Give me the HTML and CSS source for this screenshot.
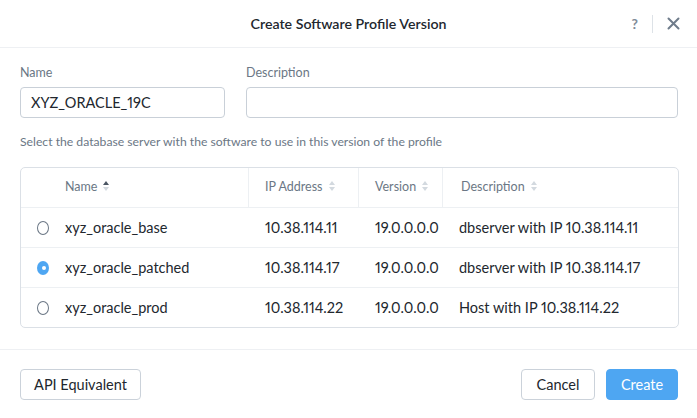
FILE: index.html
```html
<!DOCTYPE html>
<html>
<head>
<meta charset="utf-8">
<link rel="stylesheet" href="styles.css">
</head>
<body>
<div class="modal">
  <header class="header">
    <h1 class="title">Create Software Profile Version</h1>
    <div class="actions">
      <span class="help">?</span>
      <span class="sep"></span>
      <svg class="close" width="13" height="13" viewBox="0 0 13 13"><path d="M1.5 1.5 L11.5 11.5 M11.5 1.5 L1.5 11.5" stroke="#6f7c8b" stroke-width="2" stroke-linecap="round"/></svg>
    </div>
  </header>
  <main class="body">
    <div class="fields">
      <div class="field">
        <label class="label">Name</label>
        <div class="input">XYZ_ORACLE_19C</div>
      </div>
      <div class="field">
        <label class="label">Description</label>
        <div class="input"></div>
      </div>
    </div>
    <p class="hint">Select the database server with the software to use in this version of the profile</p>
    <div class="table">
      <div class="row head">
        <div class="cell sel"></div>
        <div class="cell">Name <span class="sort up"><i></i><i></i></span></div>
        <div class="cell">IP Address <span class="sort"><i></i><i></i></span></div>
        <div class="cell">Version <span class="sort"><i></i><i></i></span></div>
        <div class="cell last">Description <span class="sort"><i></i><i></i></span></div>
      </div>
      <div class="row">
        <div class="cell sel"><span class="radio"></span></div>
        <div class="cell">xyz_oracle_base</div>
        <div class="cell">10.38.114.11</div>
        <div class="cell">19.0.0.0.0</div>
        <div class="cell">dbserver with IP 10.38.114.11</div>
      </div>
      <div class="row">
        <div class="cell sel"><span class="radio on"></span></div>
        <div class="cell">xyz_oracle_patched</div>
        <div class="cell">10.38.114.17</div>
        <div class="cell">19.0.0.0.0</div>
        <div class="cell">dbserver with IP 10.38.114.17</div>
      </div>
      <div class="row">
        <div class="cell sel"><span class="radio"></span></div>
        <div class="cell">xyz_oracle_prod</div>
        <div class="cell">10.38.114.22</div>
        <div class="cell">19.0.0.0.0</div>
        <div class="cell">Host with IP 10.38.114.22</div>
      </div>
    </div>
  </main>
  <footer class="footer">
    <button class="btn api">API Equivalent</button>
    <div class="right">
      <button class="btn cancel">Cancel</button>
      <button class="btn primary">Create</button>
    </div>
  </footer>
</div>
</body>
</html>
```

FILE: styles.css
```css
* { box-sizing: border-box; }
html, body { margin: 0; padding: 0; background: #fff; }
body {
  font-family: Lato, "Open Sans", "Liberation Sans", sans-serif;
  font-variant-numeric: proportional-nums;
  font-feature-settings: "pnum" 1;
  color: #22272e;
  width: 697px;
  height: 418px;
  overflow: hidden;
}
.header {
  height: 48px;
  border-bottom: 1px solid #eef0f3;
  display: flex;
  align-items: center;
  justify-content: center;
  position: relative;
}
.title {
  margin: 0;
  font-size: 14.2px;
  font-weight: 600;
  color: #22272e;
}
.actions {
  position: absolute;
  right: 17px;
  top: 0;
  height: 47px;
  display: flex;
  align-items: center;
}
.help {
  font-size: 14px;
  color: #7f8c99;
  font-weight: 700;
}
.sep {
  width: 1px;
  height: 18px;
  background: #dde2e7;
  margin: 0 14px 0 14px;
}
.close { display: block; }
.body {
  padding: 17px 19px 0 20px;
}
.fields {
  display: grid;
  grid-template-columns: 205px 1fr;
  gap: 21px;
}
.label {
  display: block;
  font-size: 12.5px;
  line-height: 16px;
  color: #6b7785;
  margin-bottom: 6px;
}
.input {
  height: 31px;
  border: 1px solid #c9d0d8;
  border-radius: 4px;
  padding: 0 10px;
  font-size: 14.5px;
  line-height: 29px;
  color: #22272e;
}
.hint {
  margin: 16px 0 17px;
  font-size: 12.2px;
  line-height: 16px;
  color: #6b7785;
}
.table {
  border: 1px solid #dbe0e6;
  border-radius: 5px;
  width: 659px;
}
.row {
  display: grid;
  grid-template-columns: 28px 200px 110px 84px 1fr;
  height: 40px;
  border-top: 1px solid #edf0f3;
  font-size: 14.5px;
}
.row:first-child { border-top: none; height: 39px; }
.cell {
  display: flex;
  align-items: center;
  padding-left: 16px;
  white-space: nowrap;
}
.cell.sel { padding-left: 16px; }
.row.head .cell {
  color: #6b7785;
  font-size: 12.5px;
  border-right: 1px solid #edf0f3;
  padding-bottom: 3px;
}
.row.head .cell.sel { border-right: none; }
.row.head .cell.last { border-right: none; padding-left: 18px; }
.sort {
  display: inline-flex;
  flex-direction: column;
  margin-left: 6px;
  gap: 2px;
}
.sort i {
  display: block;
  width: 0;
  height: 0;
  border-left: 3.5px solid transparent;
  border-right: 3.5px solid transparent;
}
.sort i:first-child { border-bottom: 4px solid #d3d9df; }
.sort i:last-child { border-top: 4px solid #d3d9df; }
.sort.up i:first-child { border-bottom-color: #4b5663; }
.radio {
  width: 14px;
  height: 14px;
  border-radius: 50%;
  border: 1.3px solid #6b7785;
  display: block;
}
.radio.on {
  border: none;
  background: #4ea6f2;
  position: relative;
}
.radio.on::after {
  content: "";
  position: absolute;
  left: 5px;
  top: 5px;
  width: 4px;
  height: 4px;
  border-radius: 50%;
  background: #fff;
}
.footer {
  margin-top: 21px;
  border-top: 1px solid #eef0f3;
  padding: 19px 19px 0 20px;
  display: flex;
  justify-content: space-between;
}
.right { display: flex; gap: 11px; }
.btn {
  font-family: inherit;
  font-variant-numeric: proportional-nums;
  height: 31px;
  border: 1px solid #cbd2da;
  border-radius: 4px;
  background: #fff;
  color: #22272e;
  font-size: 14.5px;
  padding: 0 15px;
  cursor: pointer;
}
.btn.api { width: 121px; padding: 0; }
.btn.cancel { width: 74px; padding: 0; }
.btn.primary {
  background: #4ea6f2;
  border-color: #4ea6f2;
  color: #fff;
  width: 72px;
  padding: 0;
}
```
